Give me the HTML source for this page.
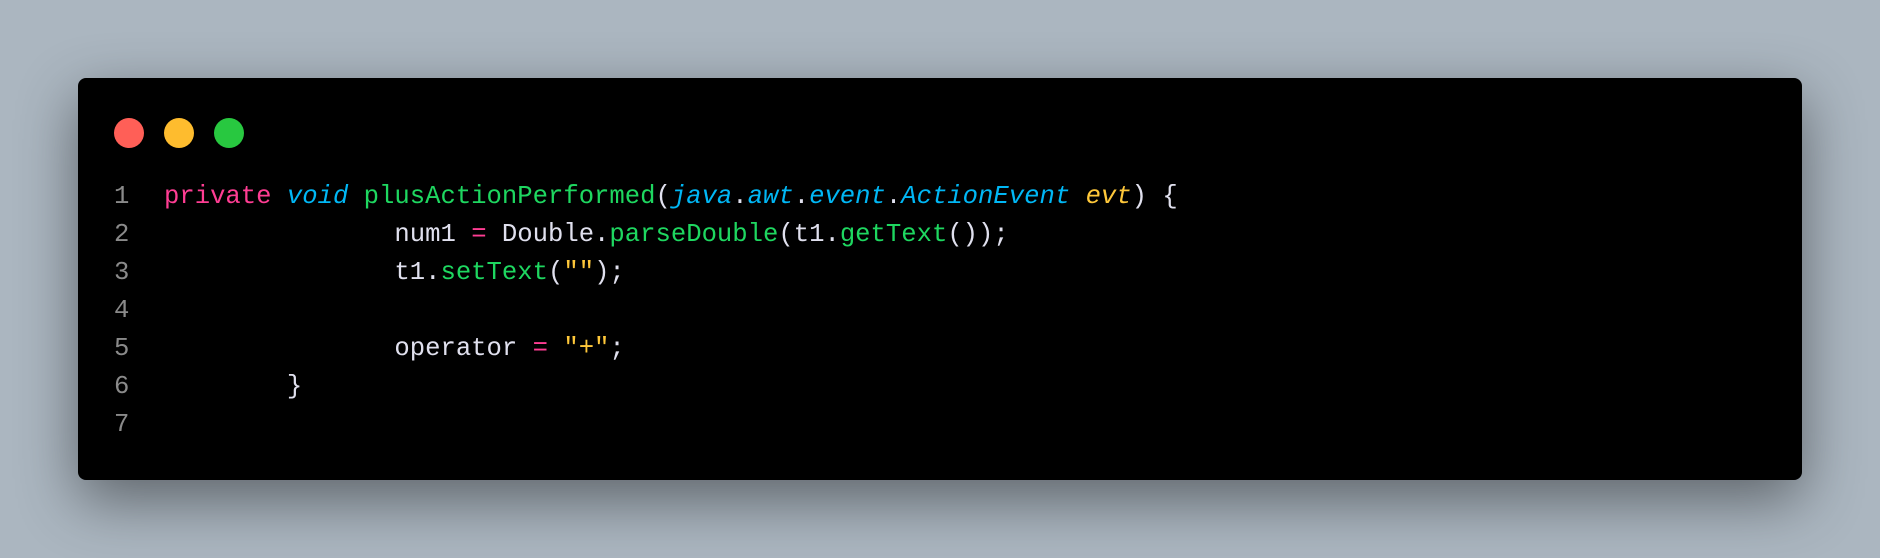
<!DOCTYPE html>
<html><head><style>
html,body{margin:0;width:1880px;height:558px;overflow:hidden;background:#abb6c0;}
.win{position:absolute;left:78px;top:78px;width:1724px;height:402px;background:#000;border-radius:8px;box-shadow:0 20px 60px rgba(0,0,0,0.45);}
.dot{position:absolute;top:40px;width:30px;height:30px;border-radius:50%;}
pre{position:absolute;left:0;top:100px;margin:0;font-family:"Liberation Mono",monospace;font-size:25.6px;line-height:38px;color:#e0e0ee;}
.ln{position:absolute;left:36px;top:100px;margin:0;font-family:"Liberation Mono",monospace;font-size:25.6px;line-height:38px;color:#8a8a8a;}
.code{left:86px;}
.k{color:#ff3d93}.t{color:#00b7f5;font-style:italic}.f{color:#1ed760}.s{color:#ffc83a}.p{color:#ffc83a;font-style:italic}
</style></head><body>
<div class="win">
<div class="dot" style="left:36px;background:#ff5f57"></div>
<div class="dot" style="left:86px;background:#febc2e"></div>
<div class="dot" style="left:136px;background:#28c840"></div>
<pre class="ln">1
2
3
4
5
6
7</pre>
<pre class="code"><span class="k">private</span> <span class="t">void</span> <span class="f">plusActionPerformed</span>(<span class="t">java</span>.<span class="t">awt</span>.<span class="t">event</span>.<span class="t">ActionEvent</span> <span class="p">evt</span>) {
               num1 <span class="k">=</span> Double.<span class="f">parseDouble</span>(t1.<span class="f">getText</span>());
               t1.<span class="f">setText</span>(<span class="s">""</span>);

               operator <span class="k">=</span> <span class="s">"+"</span>;
        }
</pre>
</div>
</body></html>
